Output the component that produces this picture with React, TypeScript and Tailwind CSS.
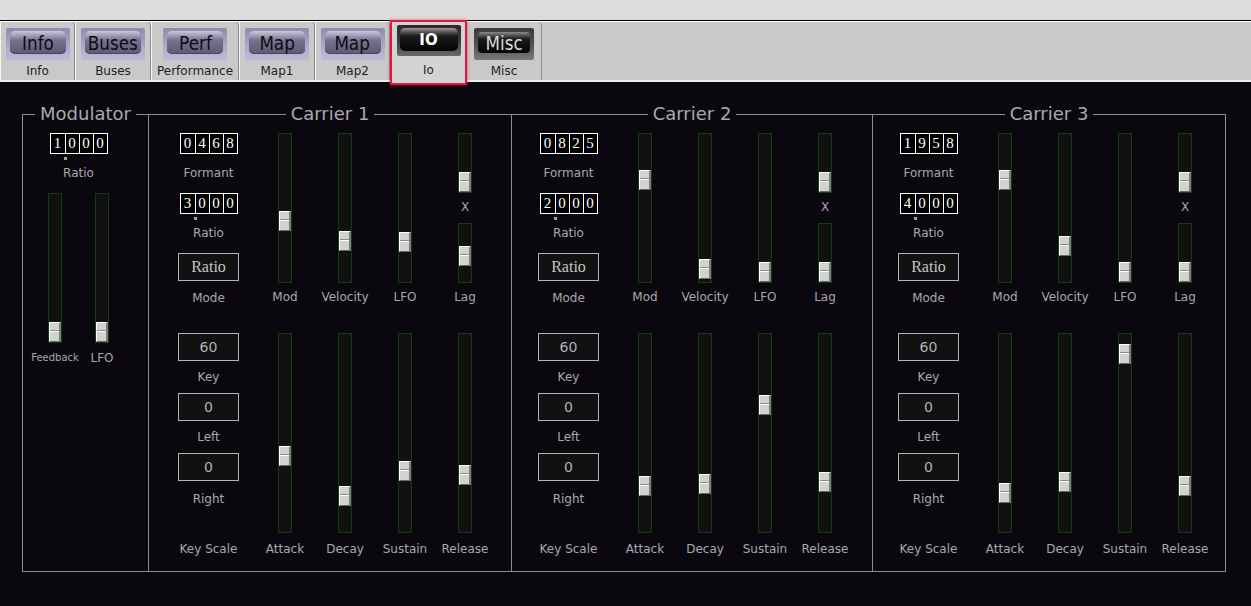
import React from "react";

const LBL = "text-[12px] leading-[14px] text-[#a8a8b0] whitespace-nowrap";

function Label({ children, className = "" }: { children: React.ReactNode; className?: string }) {
  return <div className={`${LBL} ${className}`}>{children}</div>;
}

function Slider({ h, pos, className = "" }: { h: string; pos: number; className?: string }) {
  return (
    <div className={`relative w-[14px] shrink-0 border border-[#0d3f0d] bg-[#111111] ${h} ${className}`}>
      <div
        className="absolute left-0 w-[12px] h-[20px] flex flex-col bg-[#d2d2d2] border-t border-l border-t-white border-l-white border-r-2 border-r-[#7c7c7c] border-b border-b-[#666666]"
        style={{ top: pos }}
      >
        <div className="h-[8px] border-b border-b-[#8a8a8a]" />
        <div className="flex-1 border-t border-t-white" />
      </div>
    </div>
  );
}

function Digits({ v, dot }: { v: string; dot?: boolean }) {
  return (
    <div className="relative flex h-[21px] border border-white bg-black">
      {v.split("").map((d, i) => (
        <div
          key={i}
          className={`w-[14px] flex items-center justify-center text-white text-[15px] leading-[19px] font-['Liberation_Serif',serif] ${i > 0 ? "border-l border-l-white" : ""}`}
        >
          {d}
        </div>
      ))}
      {dot && <div className="absolute left-[13px] top-[23px] w-[3px] h-[3px] bg-[#a0a0a6]" />}
    </div>
  );
}

function ValBox({ children, serif }: { children: React.ReactNode; serif?: boolean }) {
  return (
    <div
      className={`w-[61px] h-[28px] border border-[#b3b3b3] bg-[#111111] flex items-center justify-center ${
        serif ? "font-['Liberation_Serif',serif] text-[16px] text-[#c4c4c4]" : "text-[14px] text-[#b0b0b6]"
      }`}
    >
      {children}
    </div>
  );
}

function Title({ children }: { children: React.ReactNode }) {
  return (
    <div className="-mt-[12px] mx-auto px-[5px] bg-[#0b070e] text-[18px] leading-[22px] text-[#a9a9b3] whitespace-nowrap">
      {children}
    </div>
  );
}

type Carrier = {
  title: string;
  w: string;
  pl: string;
  last?: boolean;
  formant: string;
  ratio: string;
  top: number[];
  x: number;
  lag: number;
  bot: number[];
};

const carriers: Carrier[] = [
  { title: "Carrier 1", w: "w-[363px]", pl: "pl-[29px]", formant: "0468", ratio: "3000", top: [77, 97, 98], x: 38, lag: 22, bot: [112, 152, 127, 131] },
  { title: "Carrier 2", w: "w-[361px]", pl: "pl-[26px]", formant: "0825", ratio: "2000", top: [36, 125, 128], x: 38, lag: 38, bot: [142, 140, 61, 138] },
  { title: "Carrier 3", w: "w-[354px]", pl: "pl-[25px]", last: true, formant: "1958", ratio: "4000", top: [36, 102, 128], x: 38, lag: 38, bot: [149, 138, 10, 142] },
];

function SliderCol({ topPos, topLabel, botPos, botLabel }: { topPos: number; topLabel: string; botPos: number; botLabel: string }) {
  return (
    <div className="w-[60px] flex flex-col items-center">
      <Slider h="h-[150px]" pos={topPos} />
      <Label className="mt-[7px]">{topLabel}</Label>
      <Slider h="h-[200px]" pos={botPos} className="mt-[29px]" />
      <Label className="mt-[9px]">{botLabel}</Label>
    </div>
  );
}

function CarrierSection({ c }: { c: Carrier }) {
  return (
    <section
      className={`h-[458px] ${c.w} shrink-0 flex flex-col border-t border-l border-b border-[#8d8d96] ${c.last ? "border-r" : ""}`}
    >
      <Title>{c.title}</Title>
      <div className={`flex mt-[8px] ${c.pl}`}>
        <div className="w-[61px] flex flex-col items-center">
          <Digits v={c.formant} />
          <Label className="mt-[12px]">Formant</Label>
          <div className="mt-[13px]">
            <Digits v={c.ratio} dot />
          </div>
          <Label className="mt-[12px]">Ratio</Label>
          <div className="mt-[13px]">
            <ValBox serif>Ratio</ValBox>
          </div>
          <Label className="mt-[10px]">Mode</Label>
          <div className="mt-[28px]">
            <ValBox>60</ValBox>
          </div>
          <Label className="mt-[9px]">Key</Label>
          <div className="mt-[9px]">
            <ValBox>0</ValBox>
          </div>
          <Label className="mt-[9px]">Left</Label>
          <div className="mt-[9px]">
            <ValBox>0</ValBox>
          </div>
          <Label className="mt-[11px]">Right</Label>
          <Label className="mt-[36px]">Key Scale</Label>
        </div>
        <div className="ml-[16px] flex">
          <SliderCol topPos={c.top[0]} topLabel="Mod" botPos={c.bot[0]} botLabel="Attack" />
          <SliderCol topPos={c.top[1]} topLabel="Velocity" botPos={c.bot[1]} botLabel="Decay" />
          <SliderCol topPos={c.top[2]} topLabel="LFO" botPos={c.bot[2]} botLabel="Sustain" />
          <div className="w-[60px] flex flex-col items-center">
            <Slider h="h-[60px]" pos={c.x} />
            <Label className="mt-[7px]">X</Label>
            <Slider h="h-[60px]" pos={c.lag} className="mt-[9px]" />
            <Label className="mt-[7px]">Lag</Label>
            <Slider h="h-[200px]" pos={c.bot[3]} className="mt-[29px]" />
            <Label className="mt-[9px]">Release</Label>
          </div>
        </div>
      </div>
    </section>
  );
}

function Modulator() {
  return (
    <section className="h-[458px] w-[126px] shrink-0 flex flex-col border-t border-l border-b border-[#8d8d96]">
      <Title>Modulator</Title>
      <div className="flex mt-[8px] pl-[25px]">
        <div className="w-[61px] flex flex-col items-center">
          <Digits v="1000" dot />
          <Label className="mt-[12px]">Ratio</Label>
          <div className="mt-[13px] w-full flex justify-between">
            <div className="w-[14px] flex flex-col items-center">
              <Slider h="h-[150px]" pos={128} />
              <div className="mt-[8px] text-[10px] leading-[14px] text-[#a8a8b0] whitespace-nowrap">Feedback</div>
            </div>
            <div className="w-[14px] flex flex-col items-center">
              <Slider h="h-[150px]" pos={128} />
              <Label className="mt-[8px]">LFO</Label>
            </div>
          </div>
        </div>
      </div>
    </section>
  );
}

type Tab = { btn: string; label: string; w: string };

const tabs: Tab[] = [
  { btn: "Info", label: "Info", w: "w-[75px]" },
  { btn: "Buses", label: "Buses", w: "w-[76px]" },
  { btn: "Perf", label: "Performance", w: "w-[88px]" },
  { btn: "Map", label: "Map1", w: "w-[76px]" },
  { btn: "Map", label: "Map2", w: "w-[75px]" },
];

function LightTab({ t }: { t: Tab }) {
  return (
    <div className={`${t.w} shrink-0 flex flex-col items-center border-l border-l-[#f4f4f4] border-r border-r-[#8c8c8c] rounded-tr-[4px]`}>
      <div className="mt-[6px] w-[64px] h-[32px] pt-[3px] px-[4px] rounded-[2px] bg-linear-to-b from-[#8f8bab] via-[#a9a5c7] to-[#bebbd9]">
        <div className="h-[23px] rounded-[5px] flex items-center justify-center bg-linear-to-b from-[#cbc8e0] from-0% via-[#77738e] via-40% to-[#5e5a73] to-100% shadow-[inset_0_-1px_0_#4a475a]">
          <span className="inline-block scale-x-[0.84] text-[20px] leading-[22px] text-[#0c0c10]">{t.btn}</span>
        </div>
      </div>
      <div className="mt-[4px] text-[12px] leading-[14px] text-[#1e1e1e] whitespace-nowrap">{t.label}</div>
    </div>
  );
}

export default function App() {
  return (
    <div className="w-[1251px] h-[606px] overflow-hidden flex flex-col bg-[#0b070e] font-['DejaVu_Sans',sans-serif]">
      <div className="h-[20px] shrink-0 bg-[#dcdcdc]" />
      <div className="h-px shrink-0 bg-black" />
      <div className="h-px shrink-0 bg-white" />
      <div className="relative h-[60px] shrink-0 flex bg-[#c9c9c9] border-b-2 border-b-[#ececec]">
        {tabs.map((t) => (
          <LightTab key={t.label} t={t} />
        ))}
        <div className="relative z-10 -mt-[2px] -mb-[5px] w-[77px] shrink-0 flex flex-col items-center border-2 border-[#e2173f] bg-[#d4d4d4] shadow-[0_0_3px_rgba(226,23,63,0.6)]">
          <div className="mt-[3px] w-[64px] h-[31px] pt-[3px] px-[3px] rounded-[2px] bg-linear-to-b from-[#2a2a2a] via-[#3a3a3a] to-[#6a6a6a]">
            <div className="h-[23px] rounded-[5px] flex items-center justify-center bg-linear-to-b from-[#9a9a9a] from-0% via-[#1b1b1b] via-35% to-[#050505] to-100%">
              <span className="text-[15px] leading-[18px] font-bold text-white">IO</span>
            </div>
          </div>
          <div className="mt-[7px] text-[12px] leading-[14px] text-[#1e1e1e]">Io</div>
        </div>
        <div className="w-[75px] shrink-0 flex flex-col items-center border-r border-r-[#8c8c8c] rounded-tr-[4px]">
          <div className="mt-[6px] w-[60px] h-[32px] pt-[4px] px-[4px] rounded-[2px] bg-linear-to-b from-[#3c3c3c] via-[#4e4e4e] to-[#7a7a7a]">
            <div className="h-[21px] rounded-[4px] flex items-center justify-center bg-linear-to-b from-[#8c8c8c] from-0% via-[#1a1a1a] via-35% to-[#060606] to-100%">
              <span className="inline-block scale-x-[0.84] text-[20px] leading-[22px] text-[#dadada]">Misc</span>
            </div>
          </div>
          <div className="mt-[4px] text-[12px] leading-[14px] text-[#1e1e1e]">Misc</div>
        </div>
      </div>
      <div className="flex-1 pt-[32px] pl-[22px] flex items-start">
        <Modulator />
        {carriers.map((c) => (
          <CarrierSection key={c.title} c={c} />
        ))}
      </div>
    </div>
  );
}
